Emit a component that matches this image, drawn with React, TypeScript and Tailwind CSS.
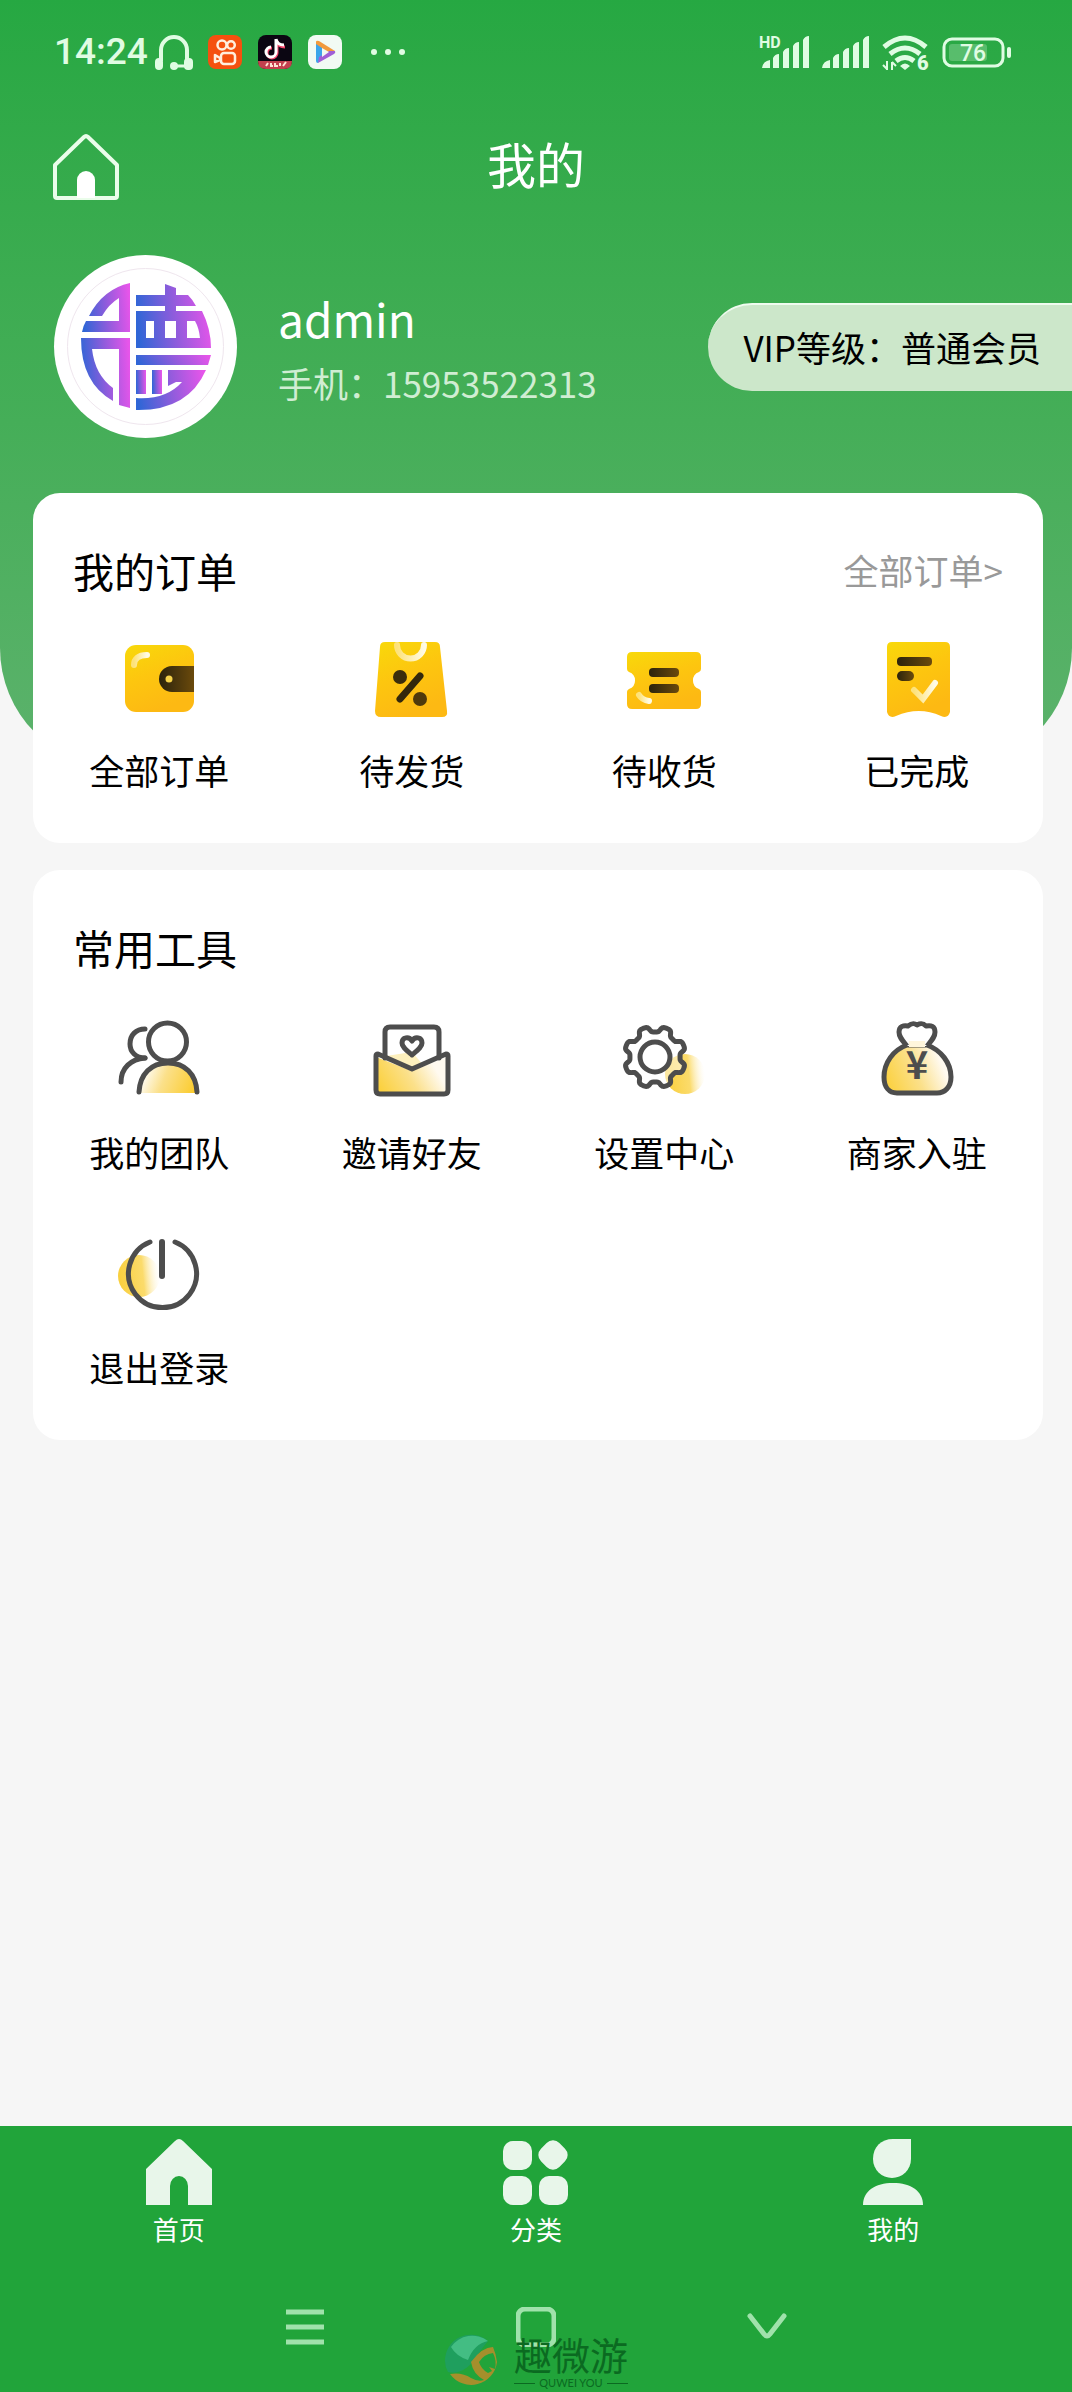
import type { ReactNode } from 'react';

interface Entry {
  label: string;
  icon: ReactNode;
}

const INK = '#4d4d4d';

// Outline of the settings cog: eight rounded teeth around (cx, cy)
function cogPath(cx: number, cy: number) {
  const points: string[] = [];
  for (let i = 0; i < 240; i++) {
    const a = (i / 240) * Math.PI * 2;
    const r = 28 - 3 * Math.tanh(2.2 * Math.cos(8 * a));
    points.push(`${(cx + r * Math.cos(a)).toFixed(2)} ${(cy + r * Math.sin(a)).toFixed(2)}`);
  }
  return `M${points.join('L')}Z`;
}

function IconBox({ children }: { children: ReactNode }) {
  return (
    <svg viewBox="0 0 80 80" className="size-20 overflow-visible" fill="none" aria-hidden="true">
      {children}
    </svg>
  );
}

function IconDefs() {
  return (
    <svg width="0" height="0" className="absolute" aria-hidden="true">
      <defs>
        <linearGradient id="gold" x1="0" y1="0" x2="0.4" y2="1">
          <stop offset="0" stopColor="#f8d90a" />
          <stop offset="0.5" stopColor="#fdc60f" />
          <stop offset="1" stopColor="#fdb913" />
        </linearGradient>
        <linearGradient id="dark" x1="0" y1="0" x2="1" y2="0">
          <stop offset="0" stopColor="#2b230c" />
          <stop offset="1" stopColor="#6b4a0c" />
        </linearGradient>
        <linearGradient id="shine" x1="0" y1="0" x2="1" y2="0">
          <stop offset="0" stopColor="#fde27a" />
          <stop offset="1" stopColor="#fffbe6" />
        </linearGradient>
        <linearGradient id="glowLeft" x1="0" y1="0.8" x2="1" y2="0.5">
          <stop offset="0" stopColor="#fbd03a" />
          <stop offset="0.5" stopColor="#fbe08a" />
          <stop offset="0.9" stopColor="#fffaf0" />
        </linearGradient>
        <linearGradient id="glowRight" x1="1" y1="0.8" x2="0" y2="0.6">
          <stop offset="0" stopColor="#fbcb2a" />
          <stop offset="0.6" stopColor="#fbe08a" />
          <stop offset="1" stopColor="#fff" />
        </linearGradient>
        <linearGradient id="glowFade" x1="0" y1="0.6" x2="1" y2="0.5">
          <stop offset="0" stopColor="#f9cf3c" />
          <stop offset="0.6" stopColor="#fbdb6b" />
          <stop offset="1" stopColor="#fff" stopOpacity="0.2" />
        </linearGradient>
        <linearGradient id="logo" x1="0" y1="0.5" x2="1" y2="0.4">
          <stop offset="0" stopColor="#2f66d6" />
          <stop offset="0.5" stopColor="#8f5cdc" />
          <stop offset="1" stopColor="#e755ea" />
        </linearGradient>
      </defs>
    </svg>
  );
}

const orders: Entry[] = [
  {
    label: '全部订单',
    icon: (
      <IconBox>
        <rect x="6" y="7" width="69" height="67" rx="11" fill="url(#gold)" />
        <path d="M75 28H53a13 13 0 0 0 0 26h22z" fill="url(#dark)" />
        <circle cx="50" cy="41" r="3.500" fill="#f6d34a" />
        <path d="M15 27c0-6 4-10 13-10" stroke="url(#shine)" strokeWidth="6" strokeLinecap="round" />
      </IconBox>
    ),
  },
  {
    label: '待发货',
    icon: (
      <IconBox>
        <path d="M13 4h50q5 0 5 5l7 64q1 6-5 6H9q-6 0-6-6L8 9q0-5 5-5z" fill="url(#gold)" />
        <path d="M25 7a13 13 0 0 0 27 0" stroke="url(#shine)" strokeWidth="6" strokeLinecap="round" />
        <circle cx="28" cy="39" r="7" fill="#3a2d0c" />
        <circle cx="48" cy="61" r="7" fill="#4f390c" />
        <path d="M28 61L48 38" stroke="#33280c" strokeWidth="7" strokeLinecap="round" />
      </IconBox>
    ),
  },
  {
    label: '待收货',
    icon: (
      <IconBox>
        <path
          d="M8 14h64q5 0 5 5v12q0 2-2 3a9 9 0 0 0 0 17q2 1 2 3v12q0 5-5 5H8q-5 0-5-5V54q0-2 2-3a9 9 0 0 0 0-17q-2-1-2-3V19q0-5 5-5z"
          fill="url(#gold)"
        />
        <rect x="25" y="30" width="30" height="9" rx="4" fill="url(#dark)" />
        <rect x="25" y="46" width="30" height="9" rx="4" fill="url(#dark)" />
        <path d="M15 57q3 5 10 6" stroke="url(#shine)" strokeWidth="6" strokeLinecap="round" />
      </IconBox>
    ),
  },
  {
    label: '已完成',
    icon: (
      <IconBox>
        <path
          d="M15 4h53q5 0 5 5v65q-2 7-9 4-22-10-45 0-7 3-9-4V9q0-5 5-5z"
          fill="url(#gold)"
        />
        <rect x="20" y="19" width="35" height="9" rx="4" fill="url(#dark)" />
        <rect x="20" y="33" width="17" height="10" rx="5" fill="url(#dark)" />
        <path d="M37 52l9 9 12-16" stroke="url(#shine)" strokeWidth="6" strokeLinecap="round" />
      </IconBox>
    ),
  },
];

const tools: Entry[] = [
  {
    label: '我的团队',
    icon: (
      <IconBox>
        <path d="M20 75a29 29 0 0 1 58 0z" fill="url(#glowRight)" />
        <g stroke={INK} strokeWidth="5" strokeLinecap="round">
          <path d="M20 74c1-18 12-29 29-29s28 11 29 29" />
          <circle cx="48.500" cy="24" r="19" fill="#fff" />
          <path d="M26 11c-9 0-15 6-15 15 0 8 6 14 15 14" />
          <path d="M26 40C12 41 2 50 2 64" />
        </g>
      </IconBox>
    ),
  },
  {
    label: '邀请好友',
    icon: (
      <IconBox>
        <path d="M4 39l36 14 35-14v36H4z" fill="url(#glowLeft)" />
        <path d="M14 38l26-4 12 14-12 5z" fill="#fdf0bd" />
        <g stroke={INK} strokeWidth="5" strokeLinecap="round" strokeLinejoin="round">
          <path d="M13 40V14q0-5 5-5h44q5 0 5 5v26" />
          <path d="M6 36q-2 0-2 2v34q0 4 4 4h64q4 0 4-4V38q0-2-2-2L40 51z" />
          <path d="M40 37c-6-5-10-8-10-12 0-6 7-7 10-2 3-5 10-4 10 2 0 4-4 7-10 12z" fill="#fff" />
        </g>
      </IconBox>
    ),
  },
  {
    label: '设置中心',
    icon: (
      <IconBox>
        <circle cx="61" cy="56" r="20" fill="url(#glowFade)" />
        <path d={cogPath(31, 39)} stroke={INK} strokeWidth="5" strokeLinejoin="round" fill="#fff" fillOpacity="0.5" />
        <circle cx="31" cy="39" r="15" stroke={INK} strokeWidth="5" fill="#fff" />
      </IconBox>
    ),
  },
  {
    label: '商家入驻',
    icon: (
      <IconBox>
        <g stroke={INK} strokeWidth="5" strokeLinejoin="round">
          <path d="M30 27h20c14 5 24 18 24 32 0 10-6 16-14 16H20C12 75 7 69 7 59c0-14 9-27 23-32z" fill="url(#glowLeft)" />
          <path
            d="M30 28c-5-6-8-9-8-14 0-6 5-7 9-6 4-3 6-3 9-1 4-2 6-2 9 1 5-1 9 0 9 6 0 5-3 8-8 14"
            fill="#fff"
          />
          <path d="M32 26h16" stroke="#fff6dc" strokeWidth="6" />
        </g>
        <text x="40" y="61" textAnchor="middle" fontSize="38" fontWeight="700" fill={INK} fontFamily="Noto Sans CJK SC, sans-serif">
          ¥
        </text>
      </IconBox>
    ),
  },
  {
    label: '退出登录',
    icon: (
      <IconBox>
        <circle cx="20" cy="43" r="21" fill="url(#glowFade)" />
        <g stroke={INK} strokeLinecap="round">
          <path d="M31 9a34 34 0 1 0 25 0" strokeWidth="5" />
          <path d="M43 9v34" strokeWidth="6" />
        </g>
      </IconBox>
    ),
  },
];

const tabs: Entry[] = [
  {
    label: '首页',
    icon: <path d="M33 0q2 0 4 2l29 28v36H42V47a9 10 0 0 0-18 0v19H0V30L29 2q2-2 4-2z" />,
  },
  {
    label: '分类',
    icon: (
      <>
        <rect x="0" y="2" width="29" height="29" rx="10" />
        <rect x="37" y="3" width="26" height="26" rx="9" transform="rotate(45 50 16)" />
        <rect x="0" y="37" width="29" height="29" rx="10" />
        <rect x="36" y="37" width="29" height="29" rx="10" />
      </>
    ),
  },
  {
    label: '我的',
    icon: (
      <>
        <path d="M33 0h18v20a19 19 0 1 1-38 0C13 8 21 0 33 0z" />
        <path d="M3 66c0-14 12-22 30-22s30 8 30 22z" />
      </>
    ),
  },
];

function StatusBar() {
  const bars = 'M0 32q1-7 8-8v8zM11 32V22q2-4 6-4v14zM21 32V16q2-4 6-4v20zM31 32V10q2-4 6-4v26zM41 32V4q2-4 6-4v32z';

  return (
    <div className="flex h-[104px] items-center justify-between pl-[54px] pr-[60px] text-[#e0fce3]">
      <div className="flex items-center">
        <time className="w-[101px] font-[Roboto,sans-serif] text-[37px] leading-10 font-medium">14:24</time>
        <svg viewBox="0 0 38 36" className="h-9 w-[38px]" fill="none" aria-hidden="true">
          <path d="M6 27V16a13 13 0 0 1 26 0v12" stroke="currentColor" strokeWidth="4" />
          <path d="M18 32h14" stroke="currentColor" strokeWidth="3" />
          <g fill="currentColor">
            <rect x="0" y="24" width="8" height="12" rx="4" />
            <rect x="29" y="24" width="9" height="12" rx="4" />
            <circle cx="19" cy="32" r="4" />
          </g>
        </svg>
        <svg viewBox="0 0 34 34" className="ml-[15px] size-[34px]" fill="none" aria-hidden="true">
          <rect width="34" height="34" rx="8" fill="#f5500f" />
          <g stroke="#ffeede" strokeWidth="2.500">
            <circle cx="14" cy="10" r="4.500" />
            <circle cx="23" cy="10" r="3.800" />
            <rect x="13" y="18" width="14" height="11" rx="3" />
            <path d="M12 23l-5-3v7l5-2z" strokeLinejoin="round" />
          </g>
        </svg>
        <svg viewBox="0 0 34 34" className="ml-4 size-[34px]" fill="none" aria-hidden="true">
          <rect width="34" height="34" rx="8" fill="#0b0612" />
          <path d="M0 26h34q0 8-8 8H8q-8 0-8-8z" fill="#c2404e" />
          <path d="M8 31l2-3M12 31h3M13 28v4M17 28v3h3M22 28v3M25 31l3-4" stroke="#ffe3d4" strokeWidth="2" />
          <g fill="none" strokeWidth="3">
            <path d="M18 5v12a5 5 0 1 1-5-5M18 5c1 4 4 6 8 6" stroke="#f2456b" transform="translate(1 1)" />
            <path d="M18 4v13a5 5 0 1 1-5-5M18 4c1 4 4 6 8 6" stroke="#fff" />
          </g>
        </svg>
        <svg viewBox="0 0 34 34" className="ml-4 size-[34px]" aria-hidden="true">
          <rect width="34" height="34" rx="8" fill="#f1faf3" />
          <path d="M8 7q0-2 3-1l16 10-4 3L8 11z" fill="#f29a3c" />
          <path d="M8 9l6 4v9l-4 6q-2 0-2-2z" fill="#3ba4ea" />
          <path d="M27 16q1 2-1 3L10 28l1-6 10-6z" fill="#a05fd6" />
          <path d="M14 13l7 4-7 5z" fill="#f1faf3" />
        </svg>
        <svg viewBox="0 0 36 8" className="ml-7 h-2 w-9 fill-current" aria-hidden="true">
          <circle cx="4" cy="4" r="3" />
          <circle cx="18" cy="4" r="3" />
          <circle cx="32" cy="4" r="3" />
        </svg>
      </div>
      <svg viewBox="0 0 254 48" className="h-12 w-[254px] overflow-visible fill-current" aria-hidden="true">
        <text x="1" y="20" fontSize="16" fontWeight="700" fontFamily="Roboto, sans-serif">HD</text>
        <path d={bars} transform="translate(4 8)" />
        <path d={bars} transform="translate(64 8)" />
        <g fill="none" stroke="currentColor" strokeWidth="5">
          <path d="M126 19q21-18 42 0" />
          <path d="M132 26q15-12 30 0" />
          <path d="M138 33q9-7 18 0" />
        </g>
        <path d="M142 38q5-5 10 0l-5 4z" />
        <path d="M129 33v9M129 41l-4-4M134 42v-8M134 34l4 4" fill="none" stroke="currentColor" strokeWidth="2" />
        <text x="159" y="42" fontSize="20" fontWeight="900" fontFamily="Roboto, sans-serif">6</text>
        <rect x="186" y="11" width="59" height="27" rx="8" fill="none" stroke="currentColor" strokeWidth="3" />
        <rect x="191" y="16" width="38" height="17" rx="3" fillOpacity="0.25" />
        <rect x="249" y="19" width="4" height="11" rx="2" />
        <text x="215" y="33" textAnchor="middle" fontSize="23" fontWeight="500" fontFamily="Roboto, sans-serif">76</text>
      </svg>
    </div>
  );
}

function Avatar() {
  return (
    <div className="flex size-[183px] shrink-0 items-center justify-center rounded-full bg-white">
      <div className="flex size-[157px] items-center justify-center rounded-full border border-[#efe6ee]">
        <svg viewBox="0 0 130 128" className="h-32 w-[130px]" fill="url(#logo)" role="img" aria-label="头像">
          <path d="M49 0v49H1q1-6 4-11h33V15Q28 21 21 33H8Q22 6 49 0z" />
          <path d="M0 55h49v70l-11-3V66H11q3 26 21 39v13Q0 100 0 55z" />
          <path
            fillRule="evenodd"
            d="M55 12h29V1l11 4v7h12q5 5 8 11H95v5h26q9 18 9 37H55V28h29v-5H55zM65 38v17h8V38zM84 38v17h11V38zM106 38v17h13q-1-10-5-17z"
          />
          <path d="M55 72h75l-3 10H55z" />
          <path d="M55 87h10v24H55z" />
          <path d="M71 87h10v24H71z" />
          <path d="M87 87h38q-18 41-70 40v-12q30 2 46-16h-6l-8 4z" />
        </svg>
      </div>
    </div>
  );
}

function EntryGrid({ items, gap }: { items: Entry[]; gap: string }) {
  return (
    <div className="grid grid-cols-4 gap-y-[55px]">
      {items.map((item) => (
        <button key={item.label} type="button" className={`flex flex-col items-center ${gap}`}>
          {item.icon}
          <span className="text-[35px] leading-[52px]">{item.label}</span>
        </button>
      ))}
    </div>
  );
}

export default function App() {
  return (
    <div className="flex min-h-screen flex-col bg-[#f6f6f6] font-['Noto_Sans_CJK_SC',sans-serif] text-black">
      <IconDefs />

      {/* Header */}
      <header className="min-h-[768px] rounded-b-[120px] bg-linear-to-b from-[#26a842] via-[#45ae58] via-55% to-[#5cb26c]">
        <StatusBar />
        <div className="grid h-[122px] grid-cols-3 items-center px-[53px] text-white">
          <a href="#home" aria-label="首页" className="justify-self-start pt-1">
            <svg viewBox="0 0 66 66" className="size-[66px]" fill="none" aria-hidden="true">
              <path d="M2 31L31 3q2-2 4 0l29 28v31q0 2-2 2H4q-2 0-2-2z" stroke="#eafdea" strokeWidth="4" strokeLinejoin="round" />
              <path d="M24 64V46a9 9 0 0 1 18 0v18z" fill="#fff" />
            </svg>
          </a>
          <h1 className="pb-1 text-center text-[49px] leading-[70px]">我的</h1>
        </div>
        <div className="flex items-center pt-[29px] pl-[54px]">
          <Avatar />
          <div className="ml-[41px] pt-2 text-white">
            <p className="text-[46px] leading-[64px]">admin</p>
            <p className="text-[35px] leading-[66px] text-[#d0edd3]">手机：15953522313</p>
          </div>
          <a
            href="#vip"
            className="ml-auto flex h-[88px] items-center rounded-l-full border-t-2 border-[#effbef] bg-[#cce7ca] pl-[35px] pr-[31px] text-[35px] whitespace-nowrap"
          >
            VIP等级：普通会员
          </a>
        </div>
      </header>

      <main className="-mt-[275px] flex flex-col gap-[27px] pr-[29px] pb-10 pl-[33px]">
        {/* Orders */}
        <section className="rounded-[27px] bg-white pt-[51px] pb-[47px]">
          <div className="mb-[42px] flex items-center justify-between px-10">
            <h2 className="text-[41px] leading-[52px]">我的订单</h2>
            <a href="#orders" className="text-[35px] leading-[52px] text-[#999]">全部订单&gt;</a>
          </div>
          <EntryGrid items={orders} gap="gap-[26px]" />
        </section>

        {/* Tools */}
        <section className="rounded-[27px] bg-white pt-[51px] pb-[47px]">
          <h2 className="mb-[45px] px-10 text-[41px] leading-[52px]">常用工具</h2>
          <EntryGrid items={tools} gap="gap-7" />
        </section>
      </main>

      {/* Tab bar and system keys */}
      <footer className="relative mt-auto bg-[#21a43a]">
        <nav className="grid grid-cols-3 pt-[13px]">
          {tabs.map((tab) => (
            <a key={tab.label} href="#tab" className="flex flex-col items-center gap-[6px] text-white">
              <svg viewBox="0 0 66 66" className="size-[66px] fill-[#e8f6ea]" aria-hidden="true">
                {tab.icon}
              </svg>
              <span className="text-[26px] leading-9">{tab.label}</span>
            </a>
          ))}
        </nav>
        <div className="flex justify-center gap-[191px] pt-[60px] pb-[45px] text-[#a0e2ab]">
          <button type="button" aria-label="菜单">
            <svg viewBox="0 0 40 40" className="size-10" stroke="currentColor" strokeWidth="5" aria-hidden="true">
              <path d="M1 5h38M1 20h38M1 35h38" />
            </svg>
          </button>
          <button type="button" aria-label="主屏幕">
            <svg viewBox="0 0 40 40" className="size-10" fill="none" stroke="currentColor" strokeWidth="5" aria-hidden="true">
              <rect x="2" y="2" width="36" height="36" rx="7" />
            </svg>
          </button>
          <button type="button" aria-label="返回">
            <svg viewBox="0 0 40 40" className="size-10" fill="none" stroke="currentColor" strokeWidth="5" strokeLinecap="round" aria-hidden="true">
              <path d="M3 9l14 18q3 4 6 0l14-18" />
            </svg>
          </button>
        </div>

        {/* Site mark laid over the bar */}
        <div className="pointer-events-none absolute inset-x-0 bottom-0 flex items-center justify-center gap-4 pb-[2px] text-[#0b6a21]">
          <svg viewBox="0 0 54 54" className="size-[54px]" aria-hidden="true">
            <path d="M1 27A26 26 0 0 1 44 7Q38 14 33 22 20 42 4 38 1 33 1 27z" fill="#1f9f5e" />
            <path d="M7 13A26 26 0 0 1 44 7Q30 10 24 26 12 22 7 13z" fill="#43bd83" />
            <path d="M6 40A26 26 0 0 0 53 28Q52 20 49 13 38 13 27 28q2 12 13 18-6 2-13-2-9-6-21-4z" fill="#a58f2c" />
            <path d="M49 19q-9 1-14 9 2 7 9 11l4-2-3-4 6 2q2-8-2-16z" fill="#21a43a" />
          </svg>
          <div>
            <p className="text-[38px] leading-[44px]">趣微游</p>
            <p className="flex items-center gap-1 font-[Lato,sans-serif] text-[11px] leading-[14px] before:h-px before:flex-1 before:bg-current after:h-px after:flex-1 after:bg-current">
              QUWEI YOU
            </p>
          </div>
        </div>
      </footer>
    </div>
  );
}
